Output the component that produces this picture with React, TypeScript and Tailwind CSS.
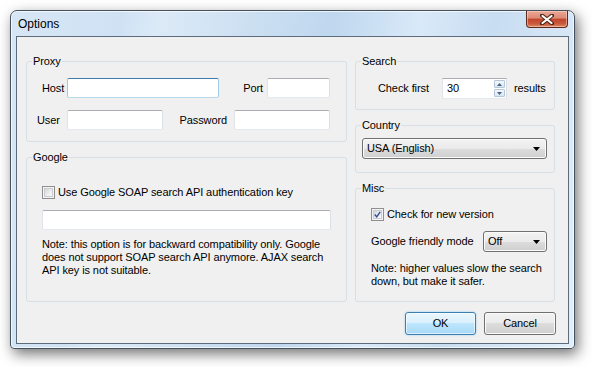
const field =
  'h-[20px] bg-white border border-[#abadb3] border-l-[#e2e3ea] border-r-[#dbdfe6] border-b-[#e3e9ef] rounded-[2px] outline-none px-[3px] text-[11px]'

const focusedField =
  'h-[20px] bg-white border border-[#3d7bad] border-l-[#a4c9e3] border-r-[#a4c9e3] border-b-[#b7d9ed] rounded-[2px] outline-none px-[3px] text-[11px]'

function Group({
  title,
  className,
  children,
}: {
  title: string
  className: string
  children: React.ReactNode
}) {
  return (
    <fieldset className={`rounded-[3px] border border-[#d5dfe5] ${className}`}>
      <legend className="ml-[5px] px-[1px] text-[11px] leading-[13px] text-black">{title}</legend>
      {children}
    </fieldset>
  )
}

function CheckBox({ checked }: { checked?: boolean }) {
  return (
    <span className="flex h-[13px] w-[13px] shrink-0 items-center justify-center border border-[#8f8f8f] bg-[#f4f4f4] p-[1px]">
      <span className="relative flex h-full w-full items-center justify-center border border-[#c9ccd1] bg-[linear-gradient(135deg,#d3d6db_0%,#eceef0_60%,#fbfbfb_100%)]">
        {checked && (
          <svg width="9" height="9" viewBox="0 0 9 9">
            <path d="M1 4.5 L3.5 7.5 L8 1" fill="none" stroke="#2c4d95" strokeWidth="1.8" />
          </svg>
        )}
      </span>
    </span>
  )
}

function Combo({ value, className }: { value: string; className: string }) {
  return (
    <div
      className={`flex h-[21px] items-center justify-between rounded-[3px] border border-[#707070] bg-[linear-gradient(#f2f2f2_0%,#ebebeb_50%,#dddddd_50%,#cfcfcf_100%)] pl-[4px] pr-[6px] text-[11px] shadow-[inset_0_0_0_1px_#fbfbfb] ${className}`}
    >
      <span>{value}</span>
      <svg width="7" height="4" viewBox="0 0 7 4">
        <polygon points="0,0 7,0 3.5,4" fill="#000" />
      </svg>
    </div>
  )
}

function SpinBox() {
  return (
    <div className="flex h-[21px] w-[65px] items-center justify-between border border-[#abadb3] border-l-[#e2e3ea] border-r-[#dbdfe6] border-b-[#e3e9ef] bg-white pl-[4px] pr-[1px]">
      <span className="text-[11px] leading-[13px]">30</span>
      <div className="flex flex-col gap-[1px]">
        <div className="flex h-[8px] w-[11px] items-center justify-center rounded-[1px] border border-[#b6c7d9] bg-[linear-gradient(#f3f8fc,#d8e6f2)]">
          <svg width="5" height="3" viewBox="0 0 5 3">
            <polygon points="2.5,0 5,3 0,3" fill="#4d6185" />
          </svg>
        </div>
        <div className="flex h-[8px] w-[11px] items-center justify-center rounded-[1px] border border-[#b6c7d9] bg-[linear-gradient(#f3f8fc,#d8e6f2)]">
          <svg width="5" height="3" viewBox="0 0 5 3">
            <polygon points="0,0 5,0 2.5,3" fill="#4d6185" />
          </svg>
        </div>
      </div>
    </div>
  )
}

export default function App() {
  return (
    <div className="h-[367px] w-[593px] overflow-hidden bg-white pl-[10px] pt-[10px] font-['Liberation_Sans',Arial,sans-serif] text-black">
      <div className="flex h-[339px] w-[565px] flex-col rounded-t-[7px] rounded-b-[4px] border border-[#45525e] bg-[linear-gradient(100deg,#d7e6f4_0%,#cfe2f4_18%,#dceaf7_24%,#cde0f2_38%,#bfd7ef_52%,#d9e9f8_66%,#c8ddf1_78%,#e2eefa_100%)] shadow-[3px_5px_14px_rgba(0,0,0,0.55),inset_0_0_0_1px_rgba(255,255,255,0.7)]">
        {/* title bar */}
        <div className="flex h-[25px] items-start justify-between pl-[7px] pr-[6px]">
          <span className="mt-[6px] text-[12px] leading-[15px] text-black">Options</span>
          <div className="flex h-[17px] w-[42px] items-center justify-center rounded-b-[4px] border border-t-0 border-[#5e2a1f] bg-[linear-gradient(#eaa897_0%,#dc8a74_45%,#c2452c_50%,#c95a3c_80%,#e08d62_100%)] shadow-[inset_0_0_0_1px_rgba(255,220,210,0.5)]">
            <svg width="14" height="11" viewBox="0 0 14 11">
              <path d="M2 1.5 L12 9.5 M12 1.5 L2 9.5" stroke="#4a2218" strokeWidth="4" strokeLinecap="round" />
              <path d="M2.5 2 L11.5 9 M11.5 2 L2.5 9" stroke="#fff" strokeWidth="2.2" strokeLinecap="round" />
            </svg>
          </div>
        </div>

        {/* client area */}
        <div className="mx-[5px] h-[308px] border border-[#5d6c7a] bg-[#f0f0f0] pl-[9px] pr-[12px] pt-[18px] text-[11px] leading-[13px] tracking-[-0.1px]">
          <div className="flex gap-[8px]">
            {/* left column */}
            <div className="flex w-[321px] flex-col gap-[9px]">
              <Group title="Proxy" className="h-[87px]">
                <div className="mt-[10px] flex items-center">
                  <span className="ml-[15px] w-[25px]">Host</span>
                  <input readOnly className={`${focusedField} w-[152px]`} />
                  <span className="w-[48px] pr-[4px] text-right">Port</span>
                  <input readOnly className={`${field} w-[63px]`} />
                </div>
                <div className="mt-[12px] flex items-center">
                  <span className="ml-[10px] w-[30px]">User</span>
                  <input readOnly className={`${field} w-[96px]`} />
                  <span className="w-[71px] pr-[7px] text-right">Password</span>
                  <input readOnly className={`${field} w-[96px]`} />
                </div>
              </Group>

              <Group title="Google" className="h-[151px]">
                <div className="ml-[15px] mt-[22px] flex h-[13px] items-center">
                  <CheckBox />
                  <span className="ml-[3px] whitespace-nowrap">Use Google SOAP search API authentication key</span>
                </div>
                <input readOnly className={`${field} ml-[15px] mt-[11px] block w-[289px]`} />
                <p className="ml-[15px] mt-[8px] whitespace-nowrap leading-[13px]">
                  Note: this option is for backward compatibility only. Google
                  <br />
                  does not support SOAP search API anymore. AJAX search
                  <br />
                  API key is not suitable.
                </p>
              </Group>
            </div>

            {/* right column */}
            <div className="flex w-[200px] flex-col gap-[9px]">
              <Group title="Search" className="h-[55px]">
                <div className="mt-[10px] flex items-center">
                  <span className="ml-[22px] w-[64px]">Check first</span>
                  <SpinBox />
                  <span className="ml-[7px]">results</span>
                </div>
              </Group>

              <Group title="Country" className="h-[54px]">
                <Combo value="USA (English)" className="ml-[6px] mt-[6px] w-[185px]" />
              </Group>

              <Group title="Misc" className="h-[120px]">
                <div className="ml-[15px] mt-[13px] flex h-[13px] items-center">
                  <CheckBox checked />
                  <span className="ml-[3px] whitespace-nowrap">Check for new version</span>
                </div>
                <div className="mt-[10px] flex items-center">
                  <span className="ml-[15px] w-[112px] whitespace-nowrap">Google friendly mode</span>
                  <Combo value="Off" className="w-[64px]" />
                </div>
                <p className="ml-[15px] mt-[10px] whitespace-nowrap leading-[13px]">
                  Note: higher values slow the search
                  <br />
                  down, but make it safer.
                </p>
              </Group>
            </div>
          </div>

          {/* buttons */}
          <div className="mt-[10px] flex justify-end gap-[8px]">
            <button className="h-[23px] w-[71px] rounded-[3px] border border-[#3c7fb1] bg-[linear-gradient(#eaf6fd_0%,#d9f0fc_50%,#bee6fd_50%,#a7d9f5_100%)] text-[11px] shadow-[inset_0_0_0_1px_rgba(255,255,255,0.6),0_0_2px_#7fc6f0]">
              OK
            </button>
            <button className="h-[23px] w-[72px] rounded-[3px] border border-[#707070] bg-[linear-gradient(#f2f2f2_0%,#ebebeb_50%,#dddddd_50%,#cfcfcf_100%)] text-[11px] shadow-[inset_0_0_0_1px_#fbfbfb]">
              Cancel
            </button>
          </div>
        </div>
      </div>
    </div>
  )
}
